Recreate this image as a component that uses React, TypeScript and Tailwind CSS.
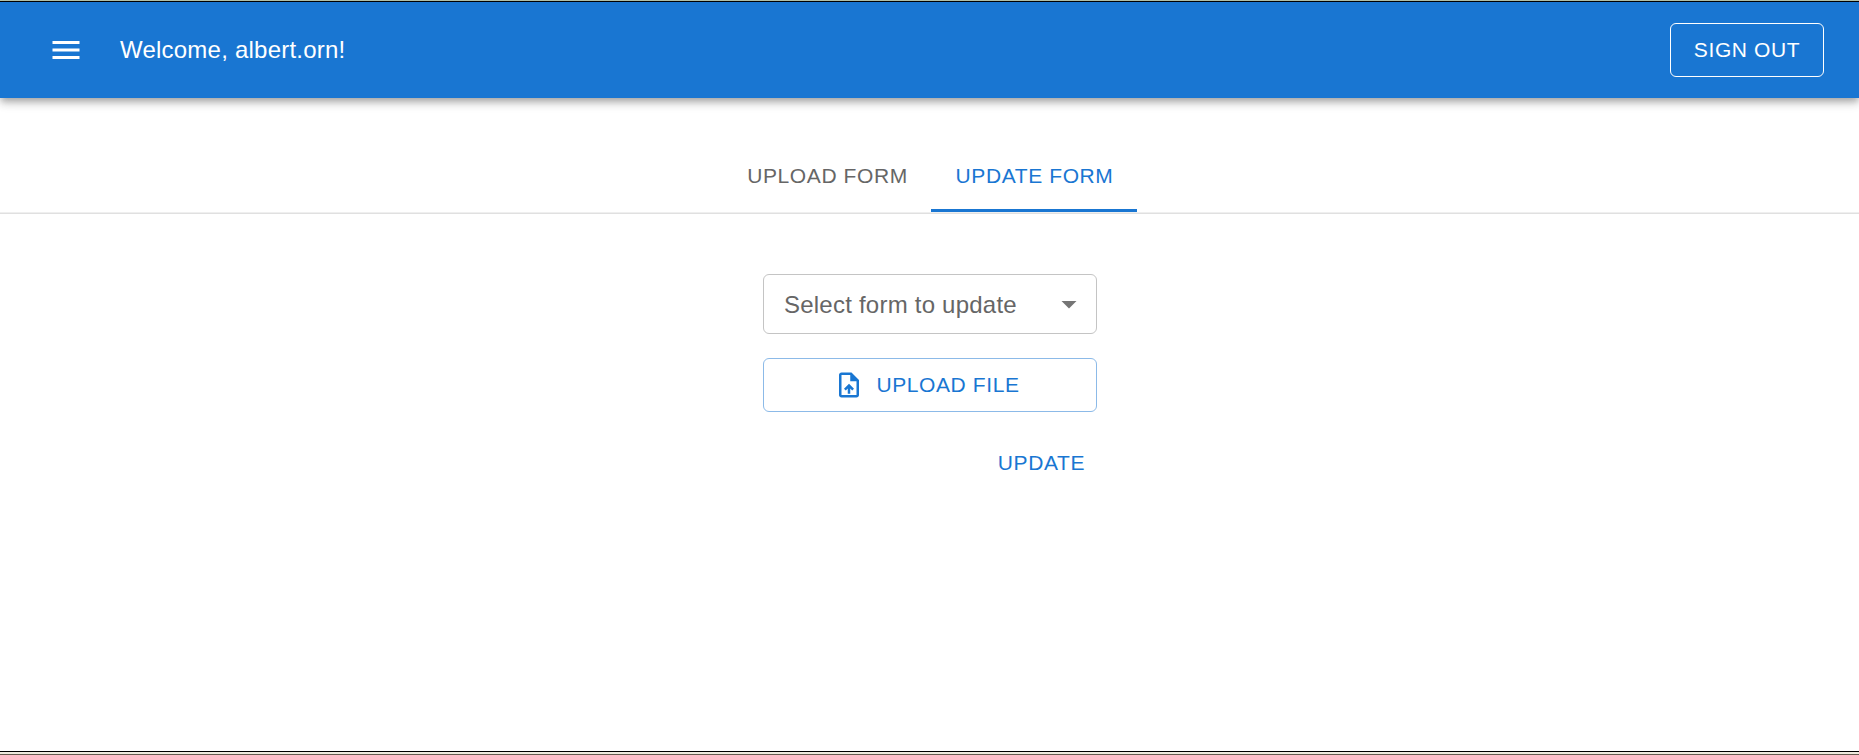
import React from "react";

function MenuIcon() {
  return (
    <svg className="size-9 shrink-0 fill-current" viewBox="0 0 24 24" aria-hidden="true">
      <path d="M3 18h18v-2H3zm0-5h18v-2H3zm0-7v2h18V6z" />
    </svg>
  );
}

function UploadFileIcon() {
  return (
    <svg className="size-[30px] shrink-0 fill-current" viewBox="0 0 24 24" aria-hidden="true">
      <path d="M14 2H6c-1.1 0-1.99.9-1.99 2L4 20c0 1.1.89 2 1.99 2H18c1.1 0 2-.9 2-2V8zm4 18H6V4h7v5h5zM8 15.01l1.41 1.41L11 14.84V19h2v-4.16l1.59 1.59L16 15.01 12.01 11z" />
    </svg>
  );
}

function ArrowDropDownIcon() {
  return (
    <svg className="size-9 shrink-0 fill-[#757575]" viewBox="0 0 24 24" aria-hidden="true">
      <path d="m7 10 5 5 5-5z" />
    </svg>
  );
}

function Header() {
  return (
    <header className="flex h-24 shrink-0 items-center bg-[#1976d2] pl-12 pr-[35px] text-white shadow-[0_3px_6px_-1.5px_rgba(0,0,0,0.2),0_6px_7.5px_0_rgba(0,0,0,0.14),0_1.5px_15px_0_rgba(0,0,0,0.12)]">
      <button type="button" aria-label="Menu" className="flex">
        <MenuIcon />
      </button>
      <p className="ml-9 grow text-2xl leading-9 tracking-[0.225px]">Welcome, albert.orn!</p>
      <button
        type="button"
        className="h-[54px] w-[154px] rounded-md border border-white text-[21px] tracking-[0.6px]"
      >
        SIGN OUT
      </button>
    </header>
  );
}

function FormTabs() {
  return (
    <div className="mt-[42px] shrink-0 border-b border-[#e0e0e0]">
      <nav className="flex justify-center border-b border-[#efefef] pl-px text-[21px] tracking-[0.6px]">
        <button type="button" className="h-[72px] w-[208px] pl-px text-[#666666]">
          UPLOAD FORM
        </button>
        <button
          type="button"
          className="h-[72px] w-[206px] border-b-[3px] border-[#1976d2] pl-px pt-[3px] text-[#1976d2]"
        >
          UPDATE FORM
        </button>
      </nav>
    </div>
  );
}

function UpdateForm() {
  return (
    <main className="mt-[60px] ml-[763px] flex w-[334px] grow flex-col">
      <button
        type="button"
        className="flex h-[60px] items-center justify-between rounded-md border border-[#c4c4c4] pl-5 pr-[9px] text-2xl tracking-[0.225px] text-[#666666]"
      >
        <span className="pt-px">Select form to update</span>
        <ArrowDropDownIcon />
      </button>
      <button
        type="button"
        className="mt-6 flex h-[54px] items-center justify-center gap-3 rounded-md border border-[#8cbae8] pr-1.5 text-[21px] tracking-[0.6px] text-[#1976d2]"
      >
        <UploadFileIcon />
        UPLOAD FILE
      </button>
      <button
        type="button"
        className="mt-6 h-[54px] self-end px-3 text-[21px] tracking-[0.6px] text-[#1976d2]"
      >
        UPDATE
      </button>
    </main>
  );
}

export default function App() {
  return (
    <div className="flex h-[755px] flex-col overflow-hidden bg-white font-['Liberation_Sans',Arial,sans-serif]">
      <div className="h-0.5 shrink-0 border-b border-black bg-[#b5c4ae]" />
      <Header />
      <FormTabs />
      <UpdateForm />
      <div className="h-1 shrink-0 border-b border-t border-b-[#655c50] border-t-black bg-[#efebdf]" />
    </div>
  );
}
